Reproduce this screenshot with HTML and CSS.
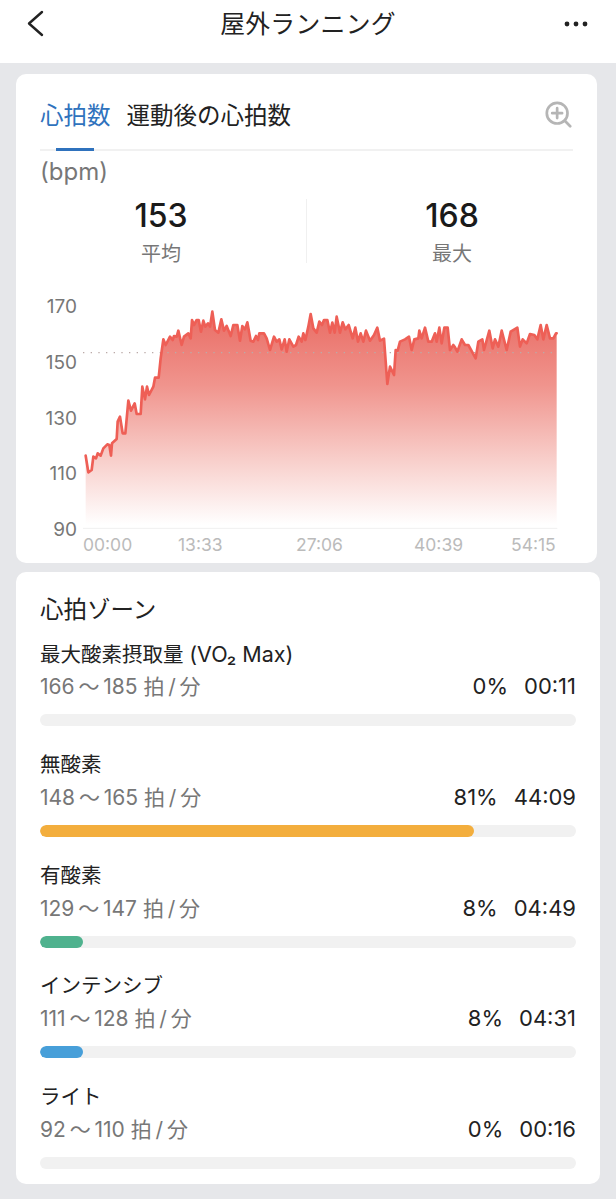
FILE: index.html
```html
<!DOCTYPE html>
<html lang="ja">
<head>
<meta charset="utf-8">
<title>屋外ランニング</title>
<link rel="stylesheet" href="styles.css">
</head>
<body>
<header class="topbar">
  <svg class="back" viewBox="0 0 18 27"><path d="M16 2 L3 13.5 L16 25"/></svg>
  <h1>屋外ランニング</h1>
  <svg class="more" viewBox="0 0 24 6"><circle cx="3" cy="3" r="2.4"/><circle cx="12" cy="3" r="2.4"/><circle cx="21" cy="3" r="2.4"/></svg>
</header>
<main class="page">
  <section class="card chart-card">
    <div class="tabs">
      <span class="tab active">心拍数</span>
      <span class="tab">運動後の心拍数</span>
      <svg class="zoom" viewBox="0 0 30 30"><circle cx="13.5" cy="13.5" r="11.5"/><path d="M13.5 8 V19 M8 13.5 H19 M22 22 L28 28"/></svg>
    </div>
    <div class="unit">(bpm)</div>
    <div class="stats">
      <div class="stat"><b>153</b><span>平均</span></div>
      <div class="stat"><b>168</b><span>最大</span></div>
    </div>
    <div class="chart">
      <div class="y-axis"><span>170</span><span>150</span><span>130</span><span>110</span><span>90</span></div>
      <svg class="plot" viewBox="159 18 1425 702">
        <defs>
          <linearGradient id="heat" x1="0" y1="60" x2="0" y2="705" gradientUnits="userSpaceOnUse">
            <stop offset="0" stop-color="#e96b63"/>
            <stop offset="0.35" stop-color="#f0948d"/>
            <stop offset="0.7" stop-color="#f8cfcb"/>
            <stop offset="1" stop-color="#ffffff"/>
          </linearGradient>
        </defs>
        <polygon class="area" points="167,705 167,497 175,547 185,540 190,500 198,505 203,490 212,497 220,475 232,463 238,465 243,497 246,460 260,447 263,395 270,380 278,430 286,430 295,332 303,362 314,340 320,372 332,372 337,290 345,328 351,290 357,315 370,290 375,263 386,263 392,205 400,148 407,165 420,140 428,150 432,138 440,140 445,122 455,165 462,140 475,130 482,145 486,90 492,105 500,90 506,90 513,125 520,92 526,110 534,100 540,110 547,65 555,120 565,128 574,88 582,122 590,108 602,138 610,105 622,105 630,152 637,108 645,118 652,97 662,152 670,155 678,138 684,150 688,130 702,130 710,145 720,180 732,140 740,155 748,148 755,178 764,148 770,185 778,148 790,170 798,165 806,140 815,155 820,130 826,150 835,110 842,72 850,115 860,128 868,95 876,105 882,90 892,90 900,128 907,98 914,128 920,80 930,128 938,97 946,118 956,105 968,145 976,113 984,155 992,130 1000,155 1008,122 1020,152 1032,135 1042,113 1050,152 1062,146 1072,282 1080,230 1092,255 1097,180 1103,182 1110,155 1125,148 1137,140 1145,180 1153,148 1165,145 1168,122 1175,145 1185,113 1195,155 1205,155 1215,130 1220,155 1228,113 1235,160 1243,113 1253,113 1260,180 1270,165 1275,172 1282,185 1295,148 1305,165 1315,165 1337,205 1345,155 1357,148 1362,180 1378,122 1388,175 1395,148 1405,170 1415,122 1430,180 1442,125 1462,113 1470,170 1478,148 1490,160 1500,132 1513,135 1522,148 1532,105 1540,148 1550,105 1560,145 1570,145 1578,130 1580,130 1580,705"/>
        <line class="avg" x1="159" y1="188" x2="1580" y2="188"/>
        <line class="base" x1="159" y1="715" x2="1582" y2="715"/>
        <polyline class="trace" points="167,497 175,547 185,540 190,500 198,505 203,490 212,497 220,475 232,463 238,465 243,497 246,460 260,447 263,395 270,380 278,430 286,430 295,332 303,362 314,340 320,372 332,372 337,290 345,328 351,290 357,315 370,290 375,263 386,263 392,205 400,148 407,165 420,140 428,150 432,138 440,140 445,122 455,165 462,140 475,130 482,145 486,90 492,105 500,90 506,90 513,125 520,92 526,110 534,100 540,110 547,65 555,120 565,128 574,88 582,122 590,108 602,138 610,105 622,105 630,152 637,108 645,118 652,97 662,152 670,155 678,138 684,150 688,130 702,130 710,145 720,180 732,140 740,155 748,148 755,178 764,148 770,185 778,148 790,170 798,165 806,140 815,155 820,130 826,150 835,110 842,72 850,115 860,128 868,95 876,105 882,90 892,90 900,128 907,98 914,128 920,80 930,128 938,97 946,118 956,105 968,145 976,113 984,155 992,130 1000,155 1008,122 1020,152 1032,135 1042,113 1050,152 1062,146 1072,282 1080,230 1092,255 1097,180 1103,182 1110,155 1125,148 1137,140 1145,180 1153,148 1165,145 1168,122 1175,145 1185,113 1195,155 1205,155 1215,130 1220,155 1228,113 1235,160 1243,113 1253,113 1260,180 1270,165 1275,172 1282,185 1295,148 1305,165 1315,165 1337,205 1345,155 1357,148 1362,180 1378,122 1388,175 1395,148 1405,170 1415,122 1430,180 1442,125 1462,113 1470,170 1478,148 1490,160 1500,132 1513,135 1522,148 1532,105 1540,148 1550,105 1560,145 1570,145 1578,130 1580,130"/>
      </svg>
      <div class="x-axis"><span>00:00</span><span>13:33</span><span>27:06</span><span>40:39</span><span>54:15</span></div>
    </div>
  </section>
  <section class="card zones">
    <h2>心拍ゾーン</h2>
    <div class="zone">
      <div class="zone-name">最大酸素摂取量 <span class="latin">(VO₂ Max)</span></div>
      <div class="zone-info"><span class="range">166&#8201;～&#8201;185 拍&#8201;/&#8201;分</span><span class="pct">0%</span><span class="time">00:11</span></div>
      <div class="track"></div>
    </div>
    <div class="zone">
      <div class="zone-name">無酸素</div>
      <div class="zone-info"><span class="range">148&#8201;～&#8201;165 拍&#8201;/&#8201;分</span><span class="pct">81%</span><span class="time">44:09</span></div>
      <div class="track"><div class="fill orange" style="width:81%"></div></div>
    </div>
    <div class="zone">
      <div class="zone-name">有酸素</div>
      <div class="zone-info"><span class="range">129&#8201;～&#8201;147 拍&#8201;/&#8201;分</span><span class="pct">8%</span><span class="time">04:49</span></div>
      <div class="track"><div class="fill green" style="width:8%"></div></div>
    </div>
    <div class="zone">
      <div class="zone-name">インテンシブ</div>
      <div class="zone-info"><span class="range">111&#8201;～&#8201;128 拍&#8201;/&#8201;分</span><span class="pct">8%</span><span class="time">04:31</span></div>
      <div class="track"><div class="fill blue" style="width:8%"></div></div>
    </div>
    <div class="zone">
      <div class="zone-name">ライト</div>
      <div class="zone-info"><span class="range">92&#8201;～&#8201;110 拍&#8201;/&#8201;分</span><span class="pct">0%</span><span class="time">00:16</span></div>
      <div class="track"></div>
    </div>
  </section>
</main>
</body>
</html>
```
FILE: styles.css
```css
* { box-sizing: border-box; }
html, body { margin: 0; padding: 0; }
body {
  width: 616px;
  height: 1199px;
  overflow: hidden;
  background: #e6e7ea;
  color: #222;
  font-family: Inter, "Noto Sans CJK JP", sans-serif;
}
.topbar {
  height: 63px;
  background: #fff;
  display: flex;
  align-items: flex-start;
  justify-content: space-between;
  padding: 10px 28px 0 26px;
}
.topbar h1 {
  margin: 0;
  font-size: 24.8px;
  font-weight: 400;
  line-height: 28px;
  letter-spacing: 0.3px;
}
.back { width: 18px; height: 27px; margin-right: 8px; }
.back path { fill: none; stroke: #222; stroke-width: 2.4; stroke-linecap: round; stroke-linejoin: round; }
.more { width: 24px; height: 6px; margin-top: 11px; }
.more circle { fill: #222; }
.page { padding-top: 11px; }
.card { background: #fff; border-radius: 10px; margin-left: 16px; }
.chart-card { width: 581px; height: 489px; padding: 0 24px; }
.tabs {
  height: 77px;
  display: flex;
  align-items: flex-start;
  gap: 16px;
  padding-top: 25px;
  border-bottom: 2px solid #f1f1f1;
  position: relative;
}
.tab { font-size: 23.5px; line-height: 34px; color: #222; position: relative; }
.tab.active { color: #2f72bd; }
.tab.active::after {
  content: "";
  position: absolute;
  left: 16px;
  width: 38px;
  top: 49px;
  height: 3px;
  background: #2f72bd;
}
.zoom { width: 27px; height: 27px; margin-left: auto; margin-top: 2px; margin-right: 1px; }
.zoom circle, .zoom path { fill: none; stroke: #b5b5b5; stroke-width: 3; stroke-linecap: round; }
.unit { font-size: 24px; line-height: 28px; color: #777; margin-top: 7px; }
.stats { display: flex; margin: 13px -24px 0; height: 64px; }
.stat { flex: 1; display: flex; flex-direction: column; align-items: center; }
.stat:first-child { flex: 0 0 291px; border-right: 1px solid #f0f0f0; }
.stat b { font-size: 32px; font-weight: 500; line-height: 36px; color: #1a1a1a; margin-top: -1px; }
.stat span { font-size: 20px; line-height: 30px; color: #777; margin-top: 5px; }
.chart {
  display: grid;
  grid-template-columns: 43px 475px;
  grid-template-rows: 234px 30px;
  margin: 33px 0 0 0;
  width: 518px;
}
.y-axis {
  grid-row: 1 / span 2;
  height: 243px;
  margin: 1px 6px 0 0;
  display: flex;
  flex-direction: column;
  justify-content: space-between;
  align-items: flex-end;
  font-size: 19px;
  line-height: 20px;
  color: #777;
}
.plot { display: block; width: 475px; height: 234px; }
.area { fill: url(#heat); }
.trace { fill: none; stroke: #ee5f56; stroke-width: 8; stroke-linejoin: round; stroke-linecap: round; }
.avg { stroke: #bbaaa8; stroke-width: 4; stroke-dasharray: 4 19; }
.base { stroke: #f0f0f0; stroke-width: 3; }
.x-axis {
  display: grid;
  grid-template-columns: 95px 118px 118px 97px auto;
  font-size: 17.5px;
  line-height: 30px;
  color: #bbb;
}
.zones { width: 584px; height: 612px; margin-top: 9px; padding: 22px 24px 15px; }
.zones h2 { margin: 0 0 13px; font-size: 23.5px; font-weight: 400; line-height: 32px; }
.zone { margin-bottom: 23.75px; }
.zone-name { font-size: 20.5px; line-height: 30px; height: 30px; }
.latin { font-size: 21.5px; }
.zone-info { display: flex; align-items: baseline; height: 34px; font-size: 22px; line-height: 35px; margin-bottom: 11px; }
.range { color: #777; margin-right: auto; font-size: 21px; }
.time { margin-left: 16px; }
.track { height: 12px; background: #f1f1f1; border-radius: 6px; overflow: hidden; }
.fill { height: 100%; border-radius: 6px; }
.orange { background: #f3ae3d; }
.green { background: #4fb28e; }
.blue { background: #479fd9; }
```
